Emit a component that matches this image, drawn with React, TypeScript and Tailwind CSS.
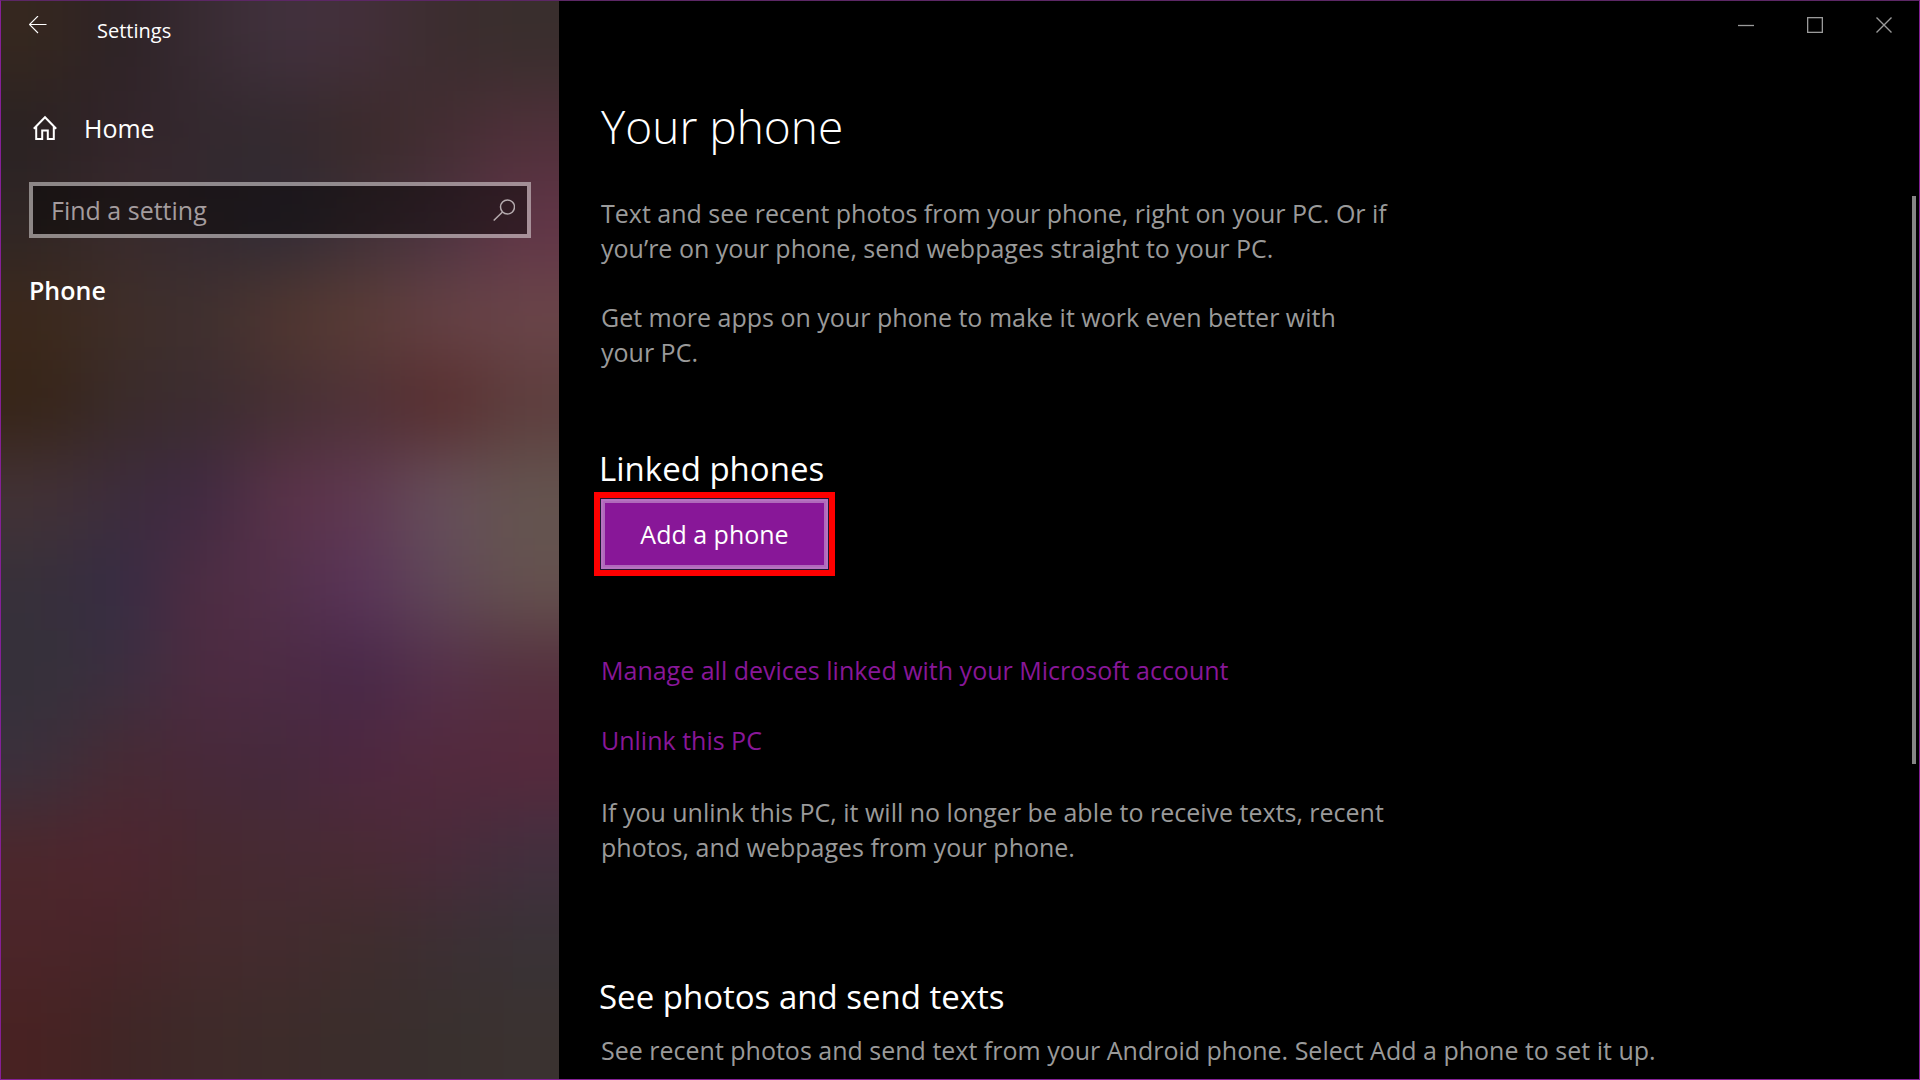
import React from "react";

const wallpaper: string[][] = [
  ["#35271f", "#2d2226", "#382b32", "#41313d", "#432f3a", "#3c2d2f", "#392e2d"],
  ["#2a2223", "#33242a", "#33282e", "#33292e", "#3a2a2a", "#432d32", "#50303a"],
  ["#302625", "#392a2c", "#352a30", "#302b36", "#3f3038", "#4b3340", "#613547"],
  ["#3c291c", "#3f2e28", "#3f3030", "#50362f", "#5a3c36", "#654145", "#6a4549"],
  ["#362417", "#3a2b2a", "#3c2c30", "#442f33", "#4f3238", "#572d2d", "#5d3d3d"],
  ["#433236", "#3d2c3c", "#3f2a42", "#5a3248", "#5f3850", "#67505c", "#64544f"],
  ["#37303a", "#362c44", "#4e2c42", "#52304a", "#5a3459", "#604858", "#65524f"],
  ["#35303a", "#3b2f40", "#4c2b40", "#4d2b44", "#482848", "#55304a", "#54303e"],
  ["#3b303c", "#472a33", "#48293a", "#45293c", "#4e2840", "#52293d", "#56293d"],
  ["#4c272c", "#4f2530", "#46292f", "#472a34", "#4a2a34", "#4a2a3a", "#432f3e"],
  ["#4b2529", "#472529", "#452a2d", "#432b2e", "#3f2d2d", "#3c2f33", "#393236"],
  ["#482222", "#3f2626", "#3e2a29", "#3d2c2a", "#3a2d2c", "#39302e", "#3a3230"],
];

function Wallpaper() {
  return (
    <svg
      className="absolute inset-0 h-full w-full"
      viewBox="0 0 560 1080"
      preserveAspectRatio="none"
      aria-hidden="true"
    >
      <defs>
        <filter
          id="soften"
          filterUnits="userSpaceOnUse"
          colorInterpolationFilters="sRGB"
          x="-200"
          y="-200"
          width="960"
          height="1480"
        >
          <feGaussianBlur stdDeviation="36" />
        </filter>
      </defs>
      <g filter="url(#soften)">
        {wallpaper.map((row, r) =>
          row.map((color, c) => {
            const left = c === 0 ? -200 : c * 80;
            const right = c === 6 ? 760 : (c + 1) * 80 + 1;
            const top = r === 0 ? -200 : r * 90;
            const bottom = r === 11 ? 1280 : (r + 1) * 90 + 1;
            return (
              <rect key={`${r}-${c}`} x={left} y={top} width={right - left} height={bottom - top} fill={color} />
            );
          }),
        )}
      </g>
    </svg>
  );
}

function Sidebar() {
  return (
    <aside className="relative w-[558px] shrink-0 overflow-hidden bg-[#3f2c30]">
      <Wallpaper />
      <div className="relative flex flex-col px-7">
        <div className="flex h-15 items-start">
          <button type="button" aria-label="Back" className="mt-3 flex h-6 w-5 items-center">
            <svg width="18" height="18" viewBox="0 0 18 18" fill="none" stroke="currentColor" strokeWidth="1.1">
              <path d="M17.5 8.5H.5M9 0 .5 8.5 9 17" />
            </svg>
          </button>
          <span className="mt-4 ml-12 text-[20px] leading-7">Settings</span>
        </div>
        <a href="#home" className="mt-[47px] flex h-10 items-center gap-[27px] pl-1 text-[25px] leading-8">
          <svg width="24" height="26" viewBox="0 0 24 26" fill="none" stroke="currentColor" strokeWidth="2">
            <path d="M.8 13.7 12 2.3l11.2 11.4M3.2 11.5V24h6v-8.6h5.6V24h6V11.5" />
          </svg>
          Home
        </a>
        <label className="mt-[34px] flex h-14 items-center border-4 border-white/45 bg-black/45 bg-clip-padding pr-3 pl-[18px]">
          <input
            type="text"
            aria-label="Find a setting"
            placeholder="Find a setting"
            className="min-w-0 flex-1 bg-transparent text-[25px] leading-8 outline-none placeholder:text-[#a49c9e]"
          />
          <svg
            width="22"
            height="22"
            viewBox="0 0 22 22"
            fill="none"
            stroke="#b5abae"
            strokeWidth="1.5"
            aria-hidden="true"
          >
            <circle cx="14.5" cy="8" r="7" />
            <path d="M9.5 13 .7 21.5" />
          </svg>
        </label>
        <h2 className="mt-[34px] text-[25px] leading-9 font-semibold">Phone</h2>
      </div>
    </aside>
  );
}

function WindowControls() {
  return (
    <div className="absolute top-0 right-px flex gap-px">
      <button type="button" aria-label="Minimize" className="flex h-12 w-[68px] items-center justify-center">
        <svg width="16" height="16" viewBox="0 0 16 16" stroke="currentColor" strokeWidth="1.3">
          <path d="M0 8.5h16" />
        </svg>
      </button>
      <button type="button" aria-label="Maximize" className="flex h-12 w-[68px] items-center justify-center">
        <svg width="16" height="16" viewBox="0 0 16 16" fill="none" stroke="currentColor" strokeWidth="1.3">
          <rect x=".65" y=".65" width="14.7" height="14.7" />
        </svg>
      </button>
      <button type="button" aria-label="Close" className="flex h-12 w-[68px] items-center justify-center">
        <svg width="16" height="16" viewBox="0 0 16 16" stroke="currentColor" strokeWidth="1.4">
          <path d="m.5.5 15 15M15.5.5l-15 15" />
        </svg>
      </button>
    </div>
  );
}

export default function App() {
  return (
    <div className="flex h-screen overflow-hidden border border-[#852096] border-t-[#5c2765] bg-black font-['Open_Sans','Noto_Sans',sans-serif] text-white">
      <Sidebar />
      <main className="relative min-w-0 flex-1 overflow-hidden pl-[42px] text-[25px] leading-[35px] text-[#9a9a9a]">
        <WindowControls />
        <h1 className="mt-[91px] text-[46px] leading-[68px] font-light text-white">Your phone</h1>
        <p className="mt-9 max-w-[800px]">
          Text and see recent photos from your phone, right on your PC. Or if
          <br />
          you’re on your phone, send webpages straight to your PC.
        </p>
        <p className="mt-[34px] max-w-[800px]">
          Get more apps on your phone to make it work even better with
          <br />
          your PC.
        </p>
        <h2 className="mt-[76px] -ml-0.5 text-[33px] leading-[46px] text-white">Linked phones</h2>
        <div className="-ml-[7px] w-fit border-[6px] border-[#ff0000] bg-[#1d1733] p-px">
          <button
            type="button"
            className="flex h-[70px] items-center border-2 border-[#b673c1] bg-[#881798] text-white"
          >
            <span className="flex h-full w-[223px] items-center justify-center border-2 border-[#b069bb]">
              Add a phone
            </span>
          </button>
        </div>
        <p className="mt-[77px]">
          <a href="#devices" className="text-[#881798]">
            Manage all devices linked with your Microsoft account
          </a>
        </p>
        <p className="mt-[35px]">
          <a href="#unlink" className="text-[#881798]">
            Unlink this PC
          </a>
        </p>
        <p className="mt-[37px] max-w-[800px]">
          If you unlink this PC, it will no longer be able to receive texts, recent
          <br />
          photos, and webpages from your phone.
        </p>
        <h2 className="mt-[109px] -ml-0.5 text-[33px] leading-[46px] text-white">See photos and send texts</h2>
        <p className="mt-[13px]">
          See recent photos and send text from your Android phone. Select Add a phone to set it up.
        </p>
        <div className="absolute top-[195px] right-[3px] h-[568px] w-1 bg-[#858585]" />
      </main>
    </div>
  );
}
